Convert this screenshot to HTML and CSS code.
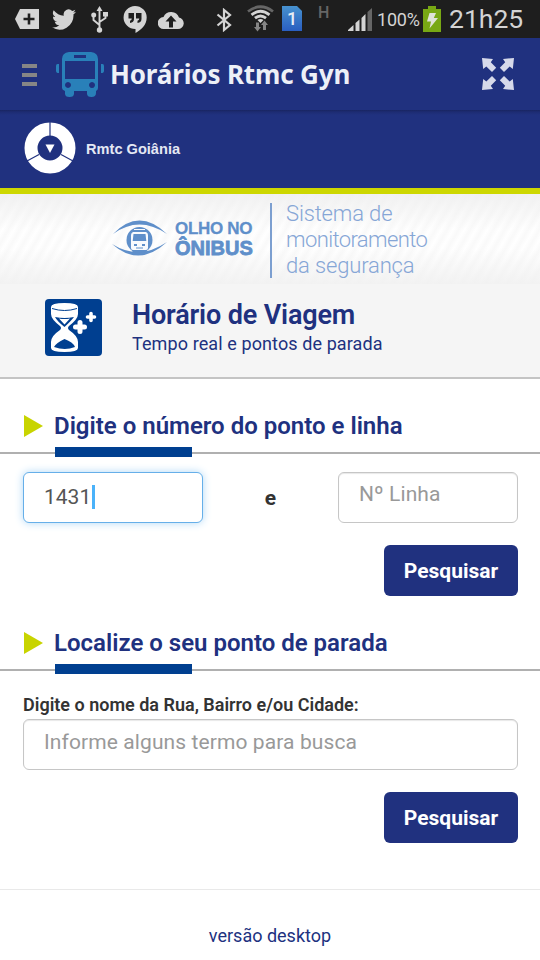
FILE: index.html
```
<!DOCTYPE html>
<html lang="pt-BR">
<head>
<meta charset="utf-8">
<title>Horários Rtmc Gyn</title>
<link rel="stylesheet" href="styles.css">
</head>
<body>
<div class="status">
  <svg class="i-tag" width="24" height="20" viewBox="0 0 24 20"><path fill="#d4d4d4" d="M5 0H24V20H5L0 10Z"/><path stroke="#1e1e1e" stroke-width="2.6" d="M14 4.500v11M8.500 10h11"/></svg>
  <svg class="i-bird" width="24" height="21" viewBox="0 2 24 20" preserveAspectRatio="none"><path fill="#d4d4d4" d="M24 4.600a10 10 0 0 1-2.800.8 5 5 0 0 0 2.100-2.700 10 10 0 0 1-3.100 1.200 4.900 4.900 0 0 0-8.400 4.500A14 14 0 0 1 1.700 3.200a4.900 4.900 0 0 0 1.500 6.500 5 5 0 0 1-2.200-.6 4.900 4.900 0 0 0 3.900 4.900 5 5 0 0 1-2.200.1 4.900 4.900 0 0 0 4.600 3.400A10 10 0 0 1 0 19.500 14 14 0 0 0 21.500 7 10 10 0 0 0 24 4.600Z"/></svg>
  <svg class="i-usb" width="17" height="27" viewBox="0 0 17 27"><g fill="none" stroke="#d4d4d4" stroke-width="1.900"><path d="M8.500 4v19M2.500 9v5l6 5M14.500 9v3l-6 4"/></g><g fill="#d4d4d4"><path d="M8.500 0l3 5h-6zM12 6h5v4.500h-5z"/><circle cx="2.700" cy="9" r="2.500"/><circle cx="8.500" cy="24" r="2.700"/></g></svg>
  <svg class="i-hang" width="24" height="27" viewBox="0 0 24 27"><path fill="#d4d4d4" d="M12 0a11.700 11.500 0 0 1 11.700 11.500C23.700 19 18 24 12.500 27v-4A11.700 11.500 0 1 1 12 0Z"/><path fill="#1e1e1e" d="M5.500 7h5.500v6q0 3.500-4 4v-2.200q1.800-.5 1.800-2.300H5.500zM13 7h5.500v6q0 3.500-4 4v-2.200q1.800-.5 1.800-2.300H13z"/></svg>
  <svg class="i-cloud" width="26" height="19" viewBox="0 0 26 19"><path fill="#d4d4d4" d="M6 19a6 6 0 0 1-.5-12A8.300 8.300 0 0 1 21 7.500 5.800 5.800 0 0 1 20 19Z"/><path fill="#1e1e1e" d="M13 5.500l5.500 6H15V17.500h-4v-6H7.500Z"/></svg>
  <svg class="i-bt" width="16" height="24" viewBox="0 0 16 24"><path fill="none" stroke="#d4d4d4" stroke-width="2.200" d="M1.500 6.500L14 17l-6 5V2l6 5L1.500 17.500"/></svg>
  <svg class="i-wifi" width="27" height="27" viewBox="0 0 27 27"><g fill="none" stroke-width="2.800"><path stroke="#666" d="M1 6.500Q13.500-3 26 6.500"/><path stroke="#d4d4d4" d="M4.500 9.800Q13.500 2.800 22.500 9.800M8 13.200Q13.500 8.800 19 13.200"/></g><path fill="#d4d4d4" d="M10.500 15q3-2 6 0l-3 3z"/><path fill="#858585" d="M9 17.500h3V22h2l-3.500 4.500L7 22h2zM16 25v-5h-2l3.500-4.500L21 20h-2v5z"/></svg>
  <svg class="i-sim" width="20" height="25" viewBox="0 0 20 25"><defs><linearGradient id="sim" x1="0" y1="0" x2="0" y2="1"><stop stop-color="#4792cf"/><stop offset="1" stop-color="#2a5ec0"/></linearGradient></defs><path fill="url(#sim)" d="M0 0h15l5 5v20H0Z"/><text x="5" y="19" class="sim-text">1</text></svg>
  <span class="net">H</span>
  <svg class="i-sig" width="24" height="23" viewBox="0 0 24 23"><path fill="#d4d4d4" d="M0 23v-1l5.500-5v6zM7.500 23v-8l4-3.500V23zM13.500 23V10l4-4v17z"/><path fill="#666" d="M19.500 23V4L24 0v23z"/></svg>
  <span class="pct">100%</span>
  <svg class="i-bat" width="18" height="26" viewBox="0 0 18 26"><path fill="#78a814" d="M0 3h5V0h8v3h5v23H0Z"/><path fill="#e0e3d8" d="M6.500 7H13l-2.200 5H15L6.500 22.500 8 15.500H4Z"/></svg>
  <span class="clock">21h25</span>
</div>

<header class="appbar">
  <div class="menu"><i></i><i></i><i></i></div>
  <svg class="bus" width="48" height="46" viewBox="0 0 48 46"><path fill="#2980b9" fill-rule="evenodd" d="M13 0h22q7 1 7 7v29q0 2-2 3v2q0 4-4.500 4T31 41.500V39H18v2.500Q18 45 13.500 45T9 41.500V39q-3-1-3-3V7q0-6 7-7ZM18 3v3h12V3ZM9 9v18h30V9ZM12 30a3 3 0 1 0 .01 0ZM36 30a3 3 0 1 0 .01 0Z"/><path fill="#2980b9" d="M3 12v9H1.500Q0 20.500 0 19v-5q0-1.800 1.500-2zM45 12v9h1.500q1.500-.5 1.500-2v-5q0-1.800-1.500-2z"/></svg>
  <h1>Horários Rtmc Gyn</h1>
  <svg class="expand" width="32" height="32" viewBox="0 0 32 32"><defs><path id="arrow" d="M0 0L11 1 8.800 4.300 14.200 9.700 10 13.900 4.300 8.500 1.200 11Z"/></defs><g fill="#d6d9ea"><use href="#arrow"/><use href="#arrow" transform="translate(32 0) scale(-1 1)"/><use href="#arrow" transform="translate(0 32) scale(1 -1)"/><use href="#arrow" transform="translate(32 32) scale(-1 -1)"/></g></svg>
</header>

<div class="brand">
  <svg width="52" height="52" viewBox="0 0 52 52"><circle cx="26" cy="26" r="19" fill="none" stroke="#fff" stroke-width="13"/><path stroke="#20317f" stroke-width="1.200" d="M26 0v14M3 39l12-6.500M49 39l-12-6.500"/><path fill="#fff" d="M21.500 22.500h9L26 31Z"/></svg>
  <span>Rmtc Goiânia</span>
</div>

<div class="banner">
  <svg class="eye" width="56" height="38" viewBox="0 0 56 38"><g fill="#5f8fca"><path d="M1 14Q27-13 55 14 27-5 1 14ZM0 24Q27 48 55 22 27 41 0 24Z"/><circle cx="27.500" cy="20" r="13"/></g><path fill="#f8fafd" d="M22 9h11v1H22zM21 12h13q2 1 2 3v13q0 2-2 2H21q-2 0-2-2V15q0-2 2-3Z"/><path fill="#5f8fca" d="M21.500 14h12l.8 7H20.700zM22 24h3v2h-3zM30 24h3v2h-3zM24 27.500h7v1h-7zM20.500 30h3v2h-3zM31.500 30h3v2h-3z"/></svg>
  <div class="olho"><span>OLHO NO</span><strong>ÔNIBUS</strong></div>
  <div class="sistema"><span class="s1">Sistema de</span><span class="s2">monitoramento</span><span class="s3">da segurança</span></div>
</div>

<section class="title">
  <svg width="57" height="57" viewBox="0 0 57 57"><rect width="57" height="57" rx="4" fill="#003f90"/><path fill="#fff" d="M6 8Q6 4 19.500 4T33 8v7q0 5-9 12-2 2 0 4 9 6 9 12v6q0 4-13.500 4T6 49v-6q0-6 9-12 2-2 0-4Q6 20 6 15Z"/><path fill="none" stroke="#003f90" stroke-width="1" d="M7 9.500q12.500 4 25 0"/><path fill="#003f90" d="M10 18q9.500 2 19 0-3 4-9.500 10Q12 22 10 18ZM9 48q2-4 10.500-8Q28 43 30 48q-10 4-21 0Z"/><path fill="#fff" d="M14 19.500q5.500 1 11 0l-5.500 6Z"/><path stroke="#fff" stroke-width="5" stroke-linecap="round" d="M35 23.500v9M30.500 28h9"/><path stroke="#fff" stroke-width="3.600" stroke-linecap="round" d="M46 14.500v7M42.500 18h7"/></svg>
  <div><h2>Horário de Viagem</h2><p>Tempo real e pontos de parada</p></div>
</section>

<main>
  <h3 class="head"><i class="tri"></i><span class="h-a">Digite o número do ponto e linha</span></h3>
  <div class="rule"><i></i></div>
  <div class="pair">
    <div class="field focus"><span>1431</span><i class="caret"></i></div>
    <b>e</b>
    <div class="field ph"><span class="linha">Nº Linha</span></div>
  </div>
  <div class="actions"><button>Pesquisar</button></div>

  <h3 class="head second"><i class="tri"></i><span class="h-b">Localize o seu ponto de parada</span></h3>
  <div class="rule"><i></i></div>
  <label>Digite o nome da Rua, Bairro e/ou Cidade:</label>
  <div class="field ph wide"><span>Informe alguns termo para busca</span></div>
  <div class="actions"><button>Pesquisar</button></div>
</main>
<footer><a>versão desktop</a></footer>
</body>
</html>
```
FILE: styles.css
```
* { box-sizing: border-box; }
body { margin: 0; width: 540px; height: 960px; overflow: hidden; background: #fff; font-family: Roboto, "Liberation Sans", sans-serif; color: #333; display: flex; flex-direction: column; }
h1, h2, h3, p { margin: 0; }
svg { display: block; flex: none; }
span { white-space: nowrap; }

.status { height: 38px; background: #1e1e1e; display: flex; align-items: flex-start; flex: none; color: #d4d4d4; }
.i-tag { margin: 9px 0 0 15px; }
.i-bird { margin: 9px 0 0 13px; }
.i-usb { margin: 6px 0 0 15px; }
.i-hang { margin: 6px 0 0 15px; }
.i-cloud { margin: 10px 0 0 11px; }
.i-bt { margin: 8px 0 0 32px; }
.i-wifi { margin: 5px 0 0 15px; }
.i-sim { margin: 6px 0 0 8px; }
.sim-text { font: 500 18px Roboto, sans-serif; fill: #e8edf5; }
.net { width: 12px; margin: 3px 0 0 16px; font-size: 16px; font-weight: 500; line-height: 19px; color: #666; }
.i-sig { margin: 8px 0 0 18px; }
.pct { width: 43px; margin: 8px 0 0 5px; font-size: 18px; line-height: 23px; letter-spacing: -.2px; }
.i-bat { margin: 6px 0 0 3px; }
.clock { margin: 3px 0 0 8px; font-size: 26.500px; line-height: 32px; }

.appbar { height: 72px; flex: none; background: #20317f; display: flex; align-items: flex-start; padding: 0 26px 0 22px; }
.menu { width: 15px; margin-top: 26px; display: grid; gap: 5px; }
.menu i { height: 4px; background: #868686; }
.bus { margin: 14px 0 0 19px; }
.appbar h1 { margin: 17px 0 0 6px; font: 700 26px/38px "Noto Sans", sans-serif; letter-spacing: -.15px; color: #edf0f7; white-space: nowrap; }
.expand { margin: 20px 0 0 auto; }

.brand { height: 84px; flex: none; background: linear-gradient(#182561, #1d2c73 2px, #20317f 5px); border-bottom: 6px solid #cdd700; display: flex; align-items: flex-start; padding: 12px 0 0 24px; }
.brand span { margin: 16px 0 0 10px; font: 700 14.600px/22px "Liberation Sans", sans-serif; color: #e4e8f4; }

.banner { height: 90px; flex: none; display: flex; align-items: flex-start; background: linear-gradient(rgba(240,240,240,.9), rgba(255,255,255,.35) 40%, rgba(255,255,255,.35) 60%, rgba(241,241,241,.9)), repeating-linear-gradient(120deg, #fff 0, #f6f6f6 5px, #fff 10px); }
.eye { margin: 26px 0 0 112px; }
.olho { margin: 25px 0 0 7px; width: 80px; display: flex; flex-direction: column; font-family: "Liberation Sans", sans-serif; color: #5f8fca; font-weight: 700; }
.olho span { font-size: 17px; line-height: 19px; letter-spacing: -.3px; -webkit-text-stroke: .3px #5f8fca; }
.olho strong { font-size: 20px; line-height: 21px; -webkit-text-stroke: .8px #5f8fca; }
.sistema { margin: 9px 0 0 15px; height: 75px; border-left: 2px solid #7c9fd0; padding-left: 14px; display: flex; flex-direction: column; font: 300 22px/26px Roboto, sans-serif; color: #86a6d6; }
.sistema span { position: relative; top: -2px; letter-spacing: -.15px; }
.sistema .s2 { letter-spacing: -.6px; }

.title { height: 95px; flex: none; background: #f5f5f5; border-bottom: 2px solid #c4c4c4; display: flex; align-items: flex-start; padding: 15px 0 0 45px; color: #20317f; }
.title div { margin-left: 30px; }
.title h2 { font-size: 27px; line-height: 32px; font-weight: 600; letter-spacing: -.15px; white-space: nowrap; }
.title p { font-size: 18px; line-height: 22px; margin-top: 2px; letter-spacing: .1px; white-space: nowrap; }

main { flex: none; height: 510px; padding: 0 22px 0 23px; }
.head { display: flex; align-items: center; height: 30px; margin-top: 32px; font-size: 24px; font-weight: 600; color: #20317f; }
.tri { width: 19px; height: 22px; margin: 0 11px 0 1px; background: #c8d400; clip-path: polygon(0 0, 100% 50%, 0 100%); }
.rule { height: 2px; margin: 11px -22px 0 -23px; background: #b0b0b0; }
.rule i { display: block; position: relative; top: -5px; width: 137px; height: 10px; margin-left: 55px; background: #003f90; }
.pair { display: flex; align-items: center; justify-content: space-between; margin-top: 18px; }
.pair b { font-size: 21px; }
.field { width: 180px; height: 51px; border: 1.500px solid #c6c6c6; border-radius: 6px; padding: 0 20px; display: flex; align-items: center; font-size: 21px; color: #555; background: #fff; box-shadow: inset 0 1px 1px #e8e8e8; }
.focus { border-color: #66afe9; box-shadow: 0 0 8px #b0d8f6; padding-bottom: 1px; }
.caret { width: 3px; height: 24px; margin-left: 1px; background: #4ab2fa; }
.ph { color: #999; padding-bottom: 6px; }
.linha { position: relative; top: -1px; letter-spacing: .1px; }
.wide { width: 495px; letter-spacing: .1px; }
.actions { display: flex; justify-content: flex-end; margin-top: 22px; }
button { width: 134px; height: 51px; border: 0; border-radius: 6px; background: #20317f; color: #fff; font: 700 21px Roboto, sans-serif; padding: 0; }
.second { margin-top: 32px; }
label { display: block; margin-top: 21px; padding-bottom: 1px; font-size: 18px; line-height: 26px; font-weight: 600; white-space: nowrap; }
footer { flex: 1; border-top: 1px solid #e9e9e9; display: flex; justify-content: center; padding-top: 35px; color: #20317f; font-size: 18px; line-height: 22px; }
```
